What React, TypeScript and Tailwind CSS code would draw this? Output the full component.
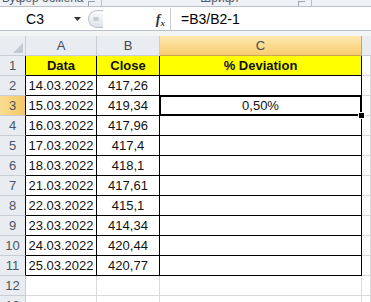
import React from 'react';

const rows: [string, string, string][] = [
  ['14.03.2022', '417,26', ''],
  ['15.03.2022', '419,34', '0,50%'],
  ['16.03.2022', '417,96', ''],
  ['17.03.2022', '417,4', ''],
  ['18.03.2022', '418,1', ''],
  ['21.03.2022', '417,61', ''],
  ['22.03.2022', '415,1', ''],
  ['23.03.2022', '414,34', ''],
  ['24.03.2022', '420,44', ''],
  ['25.03.2022', '420,77', ''],
];

const font = { fontFamily: '"Liberation Sans", Arial, sans-serif' };

function Launcher() {
  return (
    <div className="w-[7px] h-[5px] border-l border-t border-[#9aa3ad] mt-[0px]" />
  );
}

function RowHead({ n, selected, table }: { n: number; selected?: boolean; table?: boolean }) {
  return (
    <div
      className={`h-[20px] flex items-center justify-center text-[13px] text-[#4a5563] border-b border-[#c9ced6] ${
        table ? 'border-r border-r-black' : 'border-r border-r-[#c9ced6]'
      } ${selected ? 'bg-gradient-to-r from-[#f9dc91] to-[#f5c965]' : 'bg-[#e9ecf0]'}`}
    >
      {n}
    </div>
  );
}

function Cell({
  children,
  bold,
  yellow,
  top,
}: {
  children?: React.ReactNode;
  bold?: boolean;
  yellow?: boolean;
  top?: boolean;
}) {
  return (
    <div
      className={`h-[20px] flex items-center justify-center text-[13px] text-[#111] border-b border-r border-black ${
        bold ? 'font-bold' : ''
      } ${yellow ? 'bg-[#ffff00]' : 'bg-white'} ${top ? 'border-t' : ''}`}
    >
      {children}
    </div>
  );
}

function Empty() {
  return <div className="h-[20px] bg-white border-b border-r border-[#d9d9d9]" />;
}

export default function App() {
  return (
    <div className="w-[371px] h-[302px] overflow-hidden bg-white" style={font}>
      {/* ribbon group labels, cut at the top */}
      <div className="h-[7px] overflow-hidden bg-[#eef1f5] border-b border-[#b9c0c9] flex text-[12px] text-[#555c66]">
        <div className="w-[102px] flex justify-between items-end pr-[6px] border-r border-[#b9c0c9] -mt-[8px]">
          <span className="pl-[2px] leading-[15px]">Буфер обмена</span>
          <Launcher />
        </div>
        <div className="w-[210px] flex justify-between items-end pr-[6px] border-r border-[#b9c0c9] -mt-[8px]">
          <span className="flex-1 text-center leading-[15px] pl-[40px]">Шрифт</span>
          <Launcher />
        </div>
      </div>

      {/* formula bar */}
      <div className="h-[23px] mt-[1px] flex bg-white border-b border-[#b9c0c9]">
        <div className="w-[88px] flex items-center">
          <span className="w-[70px] text-center text-[14px] text-black">C3</span>
          <svg width="8" height="5" viewBox="0 0 8 5" className="ml-[4px]">
            <path d="M0 0h7L3.5 4z" fill="#333" />
          </svg>
        </div>
        <div className="w-[15px] my-[2px] rounded-l-full border border-r-0 border-[#b8bec7] bg-gradient-to-b from-[#fafbfc] to-[#dfe3e8] flex items-center justify-center">
          <div className="w-[6px] h-[4px] rounded-full bg-[#c7ccd3]" />
        </div>
        <div className="w-[67px] flex items-center justify-end pr-[5px]">
          <span
            className="italic font-bold text-[14px] text-[#333]"
            style={{ fontFamily: '"Liberation Serif", serif' }}
          >
            f<sub className="text-[9px]">x</sub>
          </span>
        </div>
        <div className="flex-1 border-l border-[#c9ced6] flex items-center pl-[10px] text-[14px] text-black">
          =B3/B2-1
        </div>
      </div>

      <div className="h-[5px] bg-[#f3f4f6]" />

      {/* sheet */}
      <div className="grid grid-cols-[26px_71px_63px_202px_1fr]">
        {/* column headers */}
        <div className="h-[20px] bg-[#e9ecf0] border-r border-b border-[#c9ced6] flex items-end justify-end p-[2px]">
          <svg width="10" height="10" viewBox="0 0 10 10">
            <path d="M10 0V10H0z" fill="#c3c9d1" />
          </svg>
        </div>
        <div className="h-[20px] bg-[#e9ecf0] border-r border-b border-[#c9ced6] flex items-center justify-center text-[13px] text-[#3f4956]">A</div>
        <div className="h-[20px] bg-[#e9ecf0] border-r border-b border-[#c9ced6] flex items-center justify-center text-[13px] text-[#3f4956]">B</div>
        <div className="h-[20px] bg-gradient-to-b from-[#fde8b0] to-[#f8cd6e] border-r border-b border-[#c9a55a] flex items-center justify-center text-[13px] text-[#3f4956]">C</div>
        <div className="h-[20px] bg-[#e9ecf0] border-b border-[#c9ced6]" />

        {/* row 1 */}
        <RowHead n={1} table />
        <Cell bold yellow>Data</Cell>
        <Cell bold yellow>Close</Cell>
        <Cell bold yellow>% Deviation</Cell>
        <Empty />

        {rows.map(([a, b, c], i) => (
          <React.Fragment key={a}>
            <RowHead n={i + 2} table selected={i === 1} />
            <Cell>{a}</Cell>
            <Cell>{b}</Cell>
            {i === 1 ? (
              <div className="relative h-[20px] flex items-center justify-center text-[13px] text-[#111] border-b border-r border-black bg-white">
                {c}
                <div className="absolute -left-[1px] -top-[1px] -right-[1px] -bottom-[1px] border-2 border-black pointer-events-none" />
                <div className="absolute -right-[4px] -bottom-[4px] w-[7px] h-[7px] bg-black border border-white" />
              </div>
            ) : (
              <Cell>{c}</Cell>
            )}
            <Empty />
          </React.Fragment>
        ))}

        {[12, 13].map((n) => (
          <React.Fragment key={n}>
            <RowHead n={n} />
            <Empty />
            <Empty />
            <Empty />
            <Empty />
          </React.Fragment>
        ))}
      </div>
    </div>
  );
}
